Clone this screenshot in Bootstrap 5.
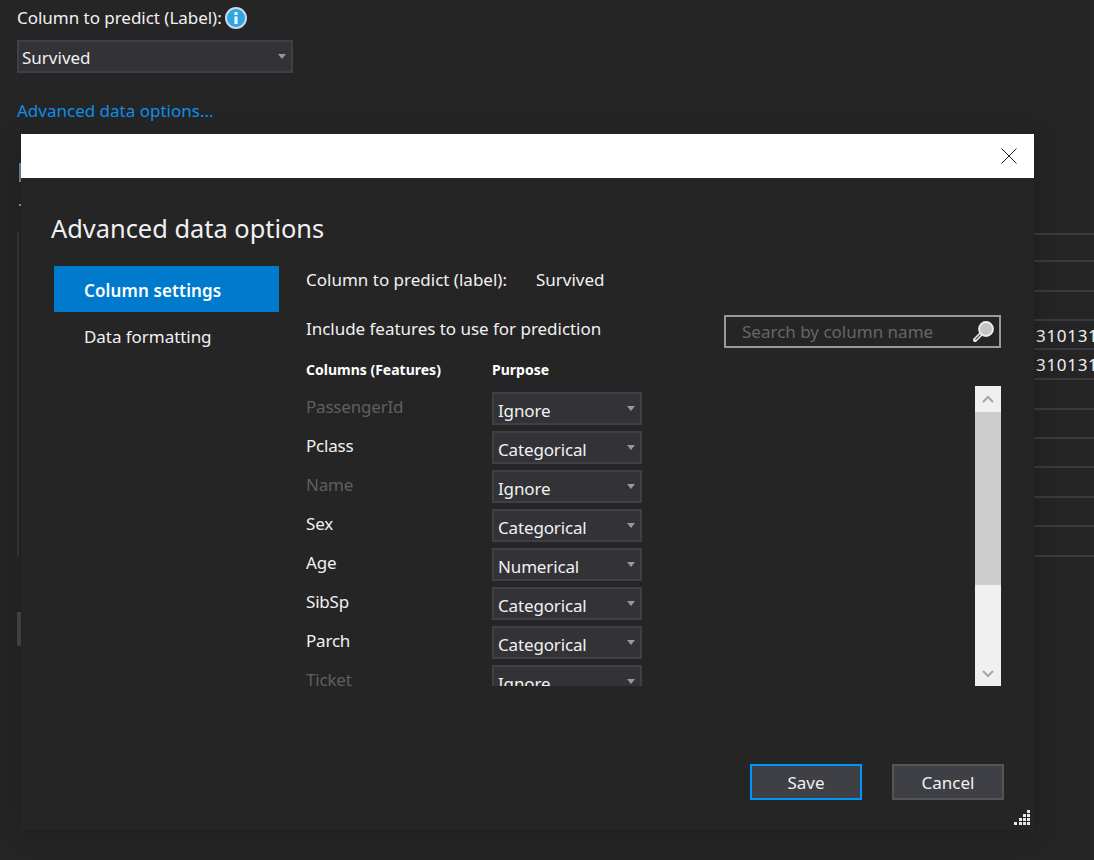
<!DOCTYPE html>
<html lang="en">
<head>
<meta charset="utf-8">
<title>Advanced data options</title>
<link href="https://cdn.jsdelivr.net/npm/bootstrap@5.3.0/dist/css/bootstrap.min.css" rel="stylesheet">
<style>
html,body{height:100%;}
body{margin:0;background:#252526;color:#f1f1f1;font-family:"Noto Sans","Open Sans",sans-serif;font-size:17px;line-height:23px;overflow:hidden;}
.stage{position:relative;width:1094px;height:860px;overflow:hidden;padding:6px 17px 0;}
.page-label{display:flex;align-items:center;gap:3px;height:23px;letter-spacing:-.03px;}
.combo{display:flex;align-items:center;justify-content:space-between;background:#333337;border:2px solid #3f3f46;}
.caret-tri{width:0;height:0;border-left:4.5px solid transparent;border-right:4.5px solid transparent;border-top:5px solid #999;}
.page-combo{width:276px;height:33px;margin-top:11px;padding:1px 5px 0 3px;}
.page-combo .caret-tri{margin-top:-2px;}
.page-link{display:block;margin-top:26px;color:#0e8fe8;text-decoration:none;}
.bg-lines{position:absolute;left:1034px;right:0;top:0;}
.bg-line{position:absolute;left:0;right:0;height:2px;background:#3a3a40;}
.bg-num{position:absolute;left:2px;color:#f1f1f1;letter-spacing:.7px;}
.bg-edge{position:absolute;}
.edge-tab{left:19px;top:163px;width:2px;height:19px;background:#6a8aa8;}
.edge-dot{left:19px;top:204px;width:2px;height:2px;background:#7a9ab8;}
.edge-table{left:17px;top:232px;width:2px;height:325px;background:#36363b;}
.edge-btn{left:17px;top:612px;width:4px;height:34px;background:#47474b;}
.dialog{position:absolute;left:21px;top:134px;width:1013px;height:696px;background:#252526;box-shadow:0 4px 24px rgba(0,0,0,.22);}
.dlg-bar{height:44px;background:#fff;display:flex;align-items:center;justify-content:flex-end;padding-right:17px;}
.dlg-body{padding:33px 30px 0 30px;position:relative;}
.dlg-title{font-size:25.4px;line-height:34px;font-weight:400;margin:0;}
.dlg-main{display:flex;margin-top:20px;}
.side{width:225px;margin-left:3px;margin-top:1px;flex:none;}
.side-item{height:46px;display:flex;align-items:center;padding:3px 0 0 30px;color:#f1f1f1;letter-spacing:-.05px;}
.side-item.on{background:#007acc;color:#fff;font-weight:600;padding-top:3px;letter-spacing:.13px;}
.content{margin-left:27px;flex:1;position:relative;}
.pred-row{display:flex;gap:29px;height:23px;margin-top:3px;}
.feat-head{display:flex;justify-content:space-between;margin-top:26px;height:36px;width:695px;}
.feat-title{letter-spacing:-.03px;}
.search-box{width:277px;height:33px;border:2px solid #999;display:flex;align-items:center;justify-content:space-between;padding:0 4px 0 16px;color:#666;margin-top:-2px;}
.col-heads{display:flex;font-size:14px;font-weight:700;line-height:20px;margin-top:7px;color:#fff;}
.col-a{width:186px;flex:none;}
.feat-area{display:flex;justify-content:space-between;width:695px;margin-top:6px;}
.feat-list{height:300px;overflow:hidden;padding-top:6px;}
.feat-row{display:flex;height:33px;margin-bottom:6px;}
.feat-row .col-a{line-height:29px;letter-spacing:-.2px;}
.feat-row.off .col-a{color:#5f5f60;}
.feat-combo{width:150px;height:33px;padding:4px 5px 0 4px;letter-spacing:-.15px;}
.feat-combo .caret-tri{margin-top:-4px;}
.sbar{width:26px;height:300px;background:#f0f0f0;display:flex;flex-direction:column;}
.sb-btn{height:26px;display:flex;align-items:center;justify-content:center;}
.sb-thumb{height:173px;background:#cdcdcd;}
.sb-track{flex:1;}
.dlg-actions{position:absolute;right:30px;bottom:30px;display:flex;gap:30px;}
.act{width:112px;height:36px;border:2px solid #555;background:#3f3f46;color:#f1f1f1;font-size:17px;line-height:22px;padding:2px 0 0;border-radius:0;}
.act.primary{border-color:#0097fb;}
.grip{position:absolute;right:3px;bottom:3px;}
</style>
</head>
<body>
<div class="stage">
  <div class="page-label">Column to predict (Label):
    <svg width="22" height="22" viewBox="0 0 22 22"><circle cx="11" cy="11" r="10" fill="#2ea6e6" stroke="#c9d9e6" stroke-width="2"/><rect x="9.5" y="9.5" width="3" height="7.5" fill="#fff"/><rect x="9.5" y="5" width="3" height="3" fill="#fff"/></svg>
  </div>
  <div class="combo page-combo"><span>Survived</span><span class="caret-tri"></span></div>
  <a class="page-link" href="#">Advanced data options...</a>

  <div class="bg-edge edge-tab"></div>
  <div class="bg-edge edge-dot"></div>
  <div class="bg-edge edge-table"></div>
  <div class="bg-edge edge-btn"></div>

  <div class="bg-lines">
    <div class="bg-line" style="top:233px"></div>
    <div class="bg-line" style="top:260px"></div>
    <div class="bg-line" style="top:290px"></div>
    <div class="bg-line" style="top:319px"></div>
    <div class="bg-line" style="top:348px"></div>
    <div class="bg-line" style="top:378px"></div>
    <div class="bg-line" style="top:408px"></div>
    <div class="bg-line" style="top:437px"></div>
    <div class="bg-line" style="top:466px"></div>
    <div class="bg-line" style="top:496px"></div>
    <div class="bg-line" style="top:525px"></div>
    <div class="bg-line" style="top:555px"></div>
    <div class="bg-num" style="top:324px">310131</div>
    <div class="bg-num" style="top:353px">310131</div>
  </div>

  <div class="dialog">
    <div class="dlg-bar">
      <svg width="16" height="16" viewBox="0 0 16 16"><path d="M.5.5l15 15M15.5.5l-15 15" stroke="#222" stroke-width="1" fill="none"/></svg>
    </div>
    <div class="dlg-body">
      <h1 class="dlg-title">Advanced data options</h1>
      <div class="dlg-main">
        <div class="side">
          <div class="side-item on">Column settings</div>
          <div class="side-item">Data formatting</div>
        </div>
        <div class="content">
          <div class="pred-row"><span>Column to predict (label):</span><span>Survived</span></div>
          <div class="feat-head">
            <span class="feat-title">Include features to use for prediction</span>
            <div class="search-box"><span>Search by column name</span>
              <svg width="24" height="24" viewBox="0 0 24 24"><circle cx="15" cy="9" r="7" fill="#c4c4c4" stroke="#eee" stroke-width="1.8"/><path d="M9.5 14.5L4 20" stroke="#eee" stroke-width="4" stroke-linecap="round"/><path d="M9.5 14.5L4.5 19.5" stroke="#555" stroke-width="1.2"/></svg>
            </div>
          </div>
          <div class="col-heads"><span class="col-a">Columns (Features)</span><span>Purpose</span></div>
          <div class="feat-area">
            <div class="feat-list">
              <div class="feat-row off"><span class="col-a">PassengerId</span><div class="combo feat-combo"><span>Ignore</span><span class="caret-tri"></span></div></div>
              <div class="feat-row"><span class="col-a">Pclass</span><div class="combo feat-combo"><span>Categorical</span><span class="caret-tri"></span></div></div>
              <div class="feat-row off"><span class="col-a">Name</span><div class="combo feat-combo"><span>Ignore</span><span class="caret-tri"></span></div></div>
              <div class="feat-row"><span class="col-a">Sex</span><div class="combo feat-combo"><span>Categorical</span><span class="caret-tri"></span></div></div>
              <div class="feat-row"><span class="col-a">Age</span><div class="combo feat-combo"><span>Numerical</span><span class="caret-tri"></span></div></div>
              <div class="feat-row"><span class="col-a">SibSp</span><div class="combo feat-combo"><span>Categorical</span><span class="caret-tri"></span></div></div>
              <div class="feat-row"><span class="col-a">Parch</span><div class="combo feat-combo"><span>Categorical</span><span class="caret-tri"></span></div></div>
              <div class="feat-row off"><span class="col-a">Ticket</span><div class="combo feat-combo"><span>Ignore</span><span class="caret-tri"></span></div></div>
            </div>
            <div class="sbar">
              <div class="sb-btn"><svg width="14" height="9" viewBox="0 0 14 9"><path d="M2 7l5-5 5 5" stroke="#a6a6a6" stroke-width="2" fill="none"/></svg></div>
              <div class="sb-thumb"></div>
              <div class="sb-track"></div>
              <div class="sb-btn"><svg width="14" height="9" viewBox="0 0 14 9"><path d="M2 2l5 5 5-5" stroke="#a6a6a6" stroke-width="2" fill="none"/></svg></div>
            </div>
          </div>
        </div>
      </div>
    </div>
    <div class="dlg-actions">
      <button class="btn act primary" type="button">Save</button>
      <button class="btn act" type="button">Cancel</button>
    </div>
    <svg class="grip" width="18" height="18" viewBox="0 0 18 18" fill="#e8e8e8"><rect x="14" y="1" width="3" height="3"/><rect x="14" y="5" width="3" height="3"/><rect x="10" y="5" width="3" height="3"/><rect x="14" y="9" width="3" height="3"/><rect x="10" y="9" width="3" height="3"/><rect x="6" y="9" width="3" height="3"/><rect x="14" y="13" width="3" height="3"/><rect x="10" y="13" width="3" height="3"/><rect x="6" y="13" width="3" height="3"/><rect x="1" y="13" width="3" height="3"/></svg>
  </div>
</div>
<script src="https://cdn.jsdelivr.net/npm/bootstrap@5.3.0/dist/js/bootstrap.bundle.min.js"></script>
</body>
</html>
